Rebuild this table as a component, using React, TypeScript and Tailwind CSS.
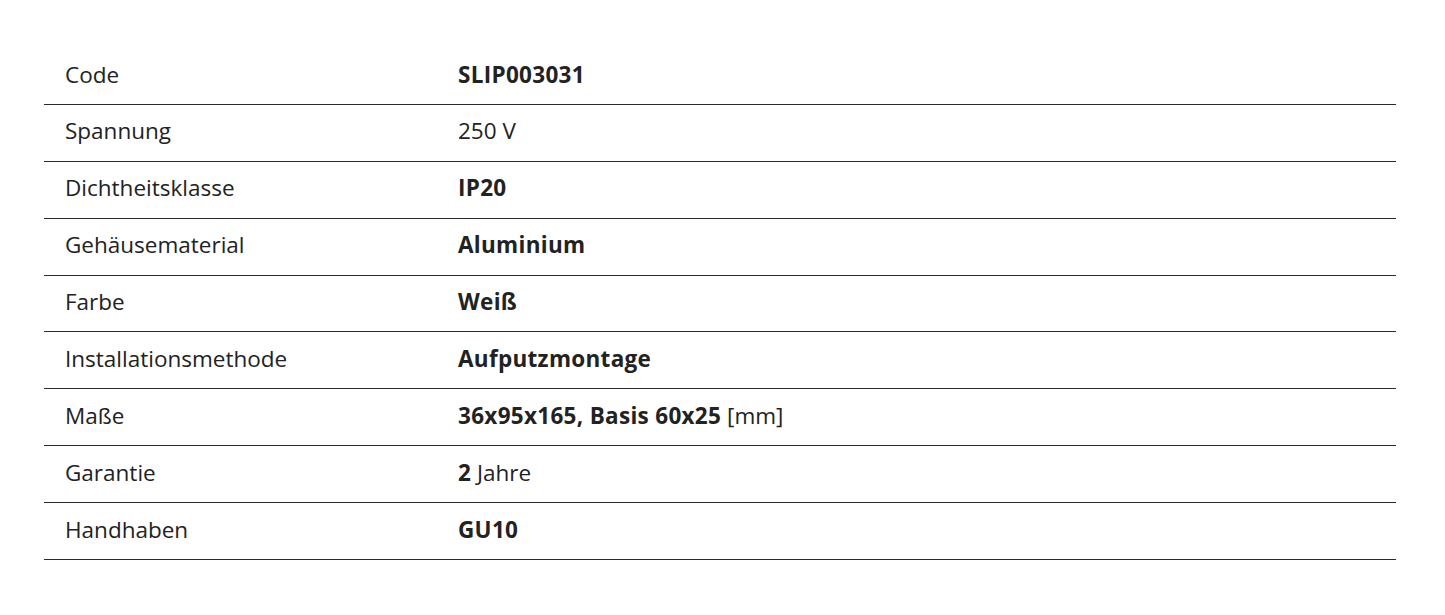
import React from "react";

const B = ({ children }: { children: React.ReactNode }) => (
  <b className="font-bold tracking-[0.3px]">{children}</b>
);

const rows: { label: string; value: React.ReactNode }[] = [
  { label: "Code", value: <B>SLIP003031</B> },
  { label: "Spannung", value: <span>250 V</span> },
  { label: "Dichtheitsklasse", value: <B>IP20</B> },
  { label: "Gehäusematerial", value: <B>Aluminium</B> },
  { label: "Farbe", value: <B>Weiß</B> },
  { label: "Installationsmethode", value: <B>Aufputzmontage</B> },
  {
    label: "Maße",
    value: (
      <span>
        <B>36x95x165, Basis 60x25</B> [mm]
      </span>
    ),
  },
  {
    label: "Garantie",
    value: (
      <span>
        <B>2</B> Jahre
      </span>
    ),
  },
  { label: "Handhaben", value: <B>GU10</B> },
];

export default function App() {
  return (
    <div
      className="w-[1445px] h-[615px] bg-white pt-[48px] pl-[44px] text-[#222]"
      style={{ fontFamily: "'Open Sans', sans-serif" }}
    >
      <div className="w-[1352px] flex flex-col">
        {rows.map((r) => (
          <div
            key={r.label}
            className="flex items-center h-[56.9px] pb-[3px] border-b-[1.5px] border-[#2a2a2a] text-[22.5px]"
          >
            <div className="w-[414px] pl-[21px]">{r.label}</div>
            <div>{r.value}</div>
          </div>
        ))}
      </div>
    </div>
  );
}
